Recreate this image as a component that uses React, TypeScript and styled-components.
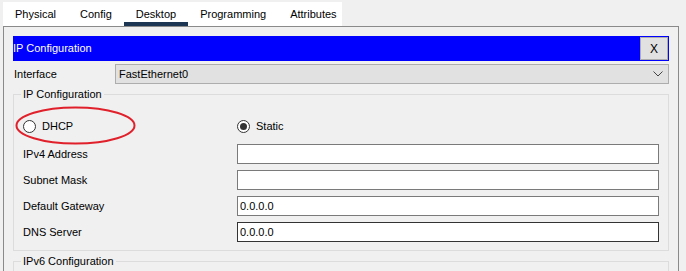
import React from "react";
import styled, { createGlobalStyle } from "styled-components";

const GlobalStyle = createGlobalStyle`
  html, body {
    margin: 0;
    padding: 0;
    background: #f0f0f0;
    overflow: hidden;
  }
  body {
    font-family: "Liberation Sans", Arial, sans-serif;
    font-size: 11px;
    color: #000;
  }
  * { box-sizing: border-box; }
`;

const Root = styled.div`
  width: 686px;
  height: 271px;
  overflow: hidden;
  position: relative;
`;

const TabStrip = styled.div`
  display: flex;
  margin: 2px 0 0 3px;
  width: 339px;
  height: 24px;
  background: #fff;
`;

const Tab = styled.div<{ $active?: boolean }>`
  position: relative;
  display: flex;
  align-items: center;
  padding: 0 12px 1px;
  height: 24px;
  white-space: nowrap;
  &::after {
    content: "";
    display: ${(p) => (p.$active ? "block" : "none")};
    position: absolute;
    left: 0;
    right: 0;
    bottom: 0;
    height: 4px;
    background: #1b3553;
  }
`;

const Panel = styled.div`
  margin: 0 0 0 3px;
  width: 676px;
  height: 260px;
  border: 1px solid #8a8a8a;
  border-bottom: none;
  padding: 9px 9px 0 9px;
  background: #f0f0f0;
`;

const HeaderBar = styled.div`
  display: flex;
  align-items: center;
  justify-content: space-between;
  height: 25px;
  background: #0000ff;
  color: #fff;
`;

const HeaderTitle = styled.span`
  padding-bottom: 1px;
`;

const CloseButton = styled.div`
  display: flex;
  align-items: center;
  justify-content: center;
  width: 28px;
  height: 23px;
  margin: 1px 1px 0 0;
  align-self: flex-start;
  background: #e1e1e1;
  border: 1px solid #adadad;
  color: #000;
  font-size: 12px;
`;

const InterfaceRow = styled.div`
  display: flex;
  align-items: center;
  margin-top: 3px;
  height: 20px;
`;

const InterfaceLabel = styled.span`
  width: 102px;
  padding-left: 1px;
`;

const Select = styled.div`
  display: flex;
  align-items: center;
  justify-content: space-between;
  width: 554px;
  height: 20px;
  background: #e1e1e1;
  border: 1px solid #adadad;
  padding: 0 5px 0 3px;
`;

const Group = styled.div<{ $height?: number }>`
  position: relative;
  margin-top: 10px;
  width: 656px;
  ${(p) => (p.$height ? `height: ${p.$height}px;` : "")}
  border: 1px solid #dcdcdc;
  padding: 21px 9px 8px 9px;
`;

const Legend = styled.span`
  position: absolute;
  left: 7px;
  top: -8px;
  padding: 0 2px;
  background: #f0f0f0;
  line-height: 14px;
`;

const RadioRow = styled.div`
  display: grid;
  grid-template-columns: 214px 422px;
  height: 20px;
  margin-bottom: 8px;
`;

const RadioCell = styled.div`
  display: flex;
  align-items: center;
  gap: 6px;
  height: 20px;
`;

const RadioCircle = styled.span<{ $checked?: boolean }>`
  position: relative;
  width: 13px;
  height: 13px;
  border-radius: 50%;
  border: 1px solid #333;
  background: #fff;
  flex: none;
  &::after {
    content: "";
    display: ${(p) => (p.$checked ? "block" : "none")};
    position: absolute;
    left: 2px;
    top: 2px;
    width: 7px;
    height: 7px;
    border-radius: 50%;
    background: #333;
  }
`;

const FormGrid = styled.div`
  display: grid;
  grid-template-columns: 214px 422px;
  grid-auto-rows: 20px;
  row-gap: 6px;
  align-items: center;
`;

const FieldLabel = styled.span``;

const TextBox = styled.div<{ $focused?: boolean }>`
  display: flex;
  align-items: center;
  height: 20px;
  width: 422px;
  background: #fff;
  border: 1px solid ${(p) => (p.$focused ? "#333333" : "#7a7a7a")};
  padding-left: 2px;
`;

const Annotation = styled.svg`
  position: absolute;
  left: 1px;
  top: 11px;
  pointer-events: none;
`;

const tabs = ["Physical", "Config", "Desktop", "Programming", "Attributes"];

const fields = [
  { label: "IPv4 Address", value: "" },
  { label: "Subnet Mask", value: "" },
  { label: "Default Gateway", value: "0.0.0.0" },
  { label: "DNS Server", value: "0.0.0.0", focused: true },
];

export default function App() {
  return (
    <Root>
      <GlobalStyle />
      <TabStrip>
        {tabs.map((t) => (
          <Tab key={t} $active={t === "Desktop"}>
            {t}
          </Tab>
        ))}
      </TabStrip>
      <Panel>
        <HeaderBar>
          <HeaderTitle>IP Configuration</HeaderTitle>
          <CloseButton>X</CloseButton>
        </HeaderBar>
        <InterfaceRow>
          <InterfaceLabel>Interface</InterfaceLabel>
          <Select>
            <span>FastEthernet0</span>
            <svg width="10" height="6" viewBox="0 0 10 6">
              <path d="M0.5 0.5 L5 5 L9.5 0.5" fill="none" stroke="#444" strokeWidth="1" />
            </svg>
          </Select>
        </InterfaceRow>
        <Group>
          <Legend>IP Configuration</Legend>
          <RadioRow>
            <RadioCell>
              <RadioCircle />
              <span>DHCP</span>
            </RadioCell>
            <RadioCell>
              <RadioCircle $checked />
              <span>Static</span>
            </RadioCell>
          </RadioRow>
          <FormGrid>
            {fields.map((f) => (
              <React.Fragment key={f.label}>
                <FieldLabel>{f.label}</FieldLabel>
                <TextBox $focused={f.focused}>{f.value}</TextBox>
              </React.Fragment>
            ))}
          </FormGrid>
          <Annotation width="121" height="39" viewBox="0 0 121 39">
            <ellipse cx="60.5" cy="19.5" rx="59" ry="18" fill="none" stroke="#e0202a" strokeWidth="2" />
          </Annotation>
        </Group>
        <Group $height={40}>
          <Legend>IPv6 Configuration</Legend>
        </Group>
      </Panel>
    </Root>
  );
}
